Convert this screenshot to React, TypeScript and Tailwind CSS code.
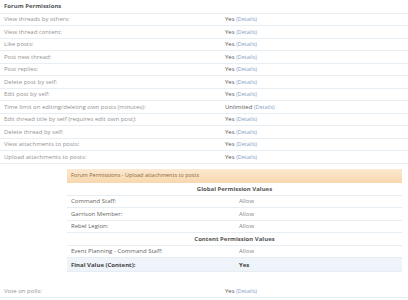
import React from "react";

type Perm = { label: string; value: string };

const perms: Perm[] = [
  { label: "View threads by others:", value: "Yes" },
  { label: "View thread content:", value: "Yes" },
  { label: "Like posts:", value: "Yes" },
  { label: "Post new thread:", value: "Yes" },
  { label: "Post replies:", value: "Yes" },
  { label: "Delete post by self:", value: "Yes" },
  { label: "Edit post by self:", value: "Yes" },
  { label: "Time limit on editing/deleting own posts (minutes):", value: "Unlimited" },
  { label: "Edit thread title by self (requires edit own post):", value: "Yes" },
  { label: "Delete thread by self:", value: "Yes" },
  { label: "View attachments to posts:", value: "Yes" },
  { label: "Upload attachments to posts:", value: "Yes" },
];

const globals = ["Command Staff:", "Garrison Member:", "Rebel Legion:"];

function PermRow({ label, value }: Perm) {
  return (
    <div className="flex items-center h-[12.5px] border-b border-[#e6edf3]">
      <div className="w-[225px] pl-[4px] text-[#939393] truncate">{label}</div>
      <div className="text-[#555]">
        {value} <span className="text-[5.5px] text-[#86a3c4]">(Details)</span>
      </div>
    </div>
  );
}

function BoxRow({ label, value, strong }: { label: string; value: string; strong?: boolean }) {
  return (
    <div
      className={`flex items-center h-[12.5px] border-b border-[#e6edf3] ${
        strong ? "h-[14px] bg-[#eef4f9] font-bold text-[#444]" : "text-[#666]"
      }`}
    >
      <div className="w-[172px] pl-[4px]">{label}</div>
      <div className={strong ? "text-[#444]" : "text-[#888]"}>{value}</div>
    </div>
  );
}

export default function App() {
  return (
    <div
      className="w-[408px] h-[300px] bg-white overflow-hidden text-[6px] leading-none"
      style={{ fontFamily: '"Open Sans", "Liberation Sans", sans-serif' }}
    >
      {/* Header */}
      <div className="flex items-center h-[13.5px] pl-[4px] border-b border-[#e6edf3] font-bold text-[#555]">
        Forum Permissions
      </div>

      {perms.map((p) => (
        <PermRow key={p.label} {...p} />
      ))}

      {/* Nested detail box */}
      <div className="ml-[67px] mr-[6px] mt-[5px] mb-[13px]">
        <div className="flex items-center h-[14px] pl-[4px] text-[5.5px] text-[#8a6a40] bg-gradient-to-b from-[#fbe9d2] to-[#f8d7ad]">
          Forum Permissions - Upload attachments to posts
        </div>

        <div className="flex items-center justify-center h-[13px] border-b border-[#e6edf3] font-bold text-[#555]">
          Global Permission Values
        </div>
        {globals.map((g) => (
          <BoxRow key={g} label={g} value="Allow" />
        ))}

        <div className="flex items-center justify-center h-[12.5px] border-b border-[#e6edf3] font-bold text-[#555]">
          Content Permission Values
        </div>
        <BoxRow label="Event Planning - Command Staff:" value="Allow" />
        <BoxRow label="Final Value (Content):" value="Yes" strong />
      </div>

      <PermRow label="Vote on polls:" value="Yes" />
    </div>
  );
}
